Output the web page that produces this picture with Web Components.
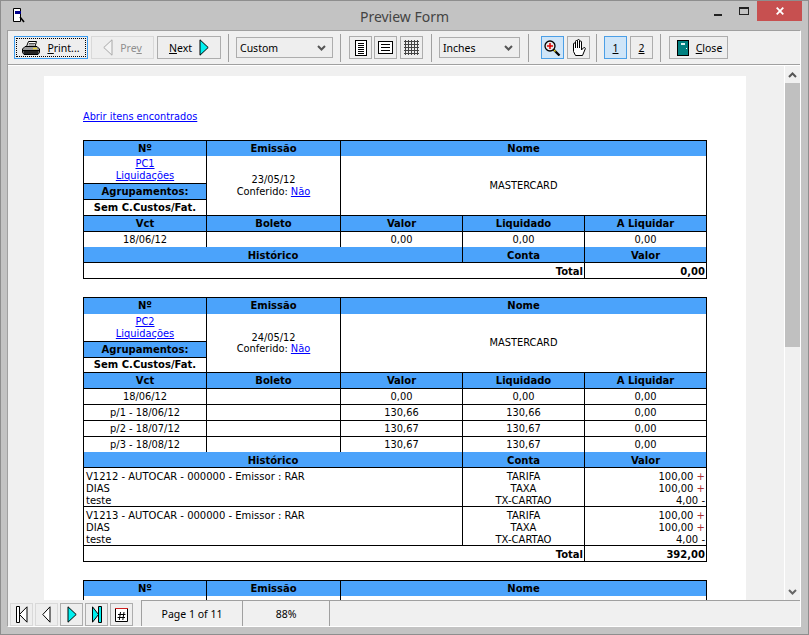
<!DOCTYPE html>
<html lang="pt"><head><meta charset="utf-8"><title>Preview Form</title>
<style>
html,body{margin:0;height:100%;overflow:hidden;background:#c3c3c3}
</style></head><body>
<pv-window>
<pv-title slot="title">Preview Form</pv-title>
<pv-toolbar slot="toolbar">
  <pv-btn w="74" focus icon="print"><u>P</u>rint...</pv-btn>
  <pv-btn w="63" disabled icon="prev">Pre<u>v</u></pv-btn>
  <pv-btn w="64" icon="next" after><u>N</u>ext</pv-btn>
  <pv-sep style="margin:0 4px"></pv-sep>
  <pv-select w="97">Custom</pv-select>
  <pv-sep style="margin:0 5px 0 4px"></pv-sep>
  <pv-btn w="23" icon="page1"></pv-btn>
  <pv-btn w="23" icon="page2" style="margin-left:-1px"></pv-btn>
  <pv-btn w="23" icon="grid"></pv-btn>
  <pv-sep style="margin:0 4px 0 5px"></pv-sep>
  <pv-select w="81">Inches</pv-select>
  <pv-sep style="margin:0 9px 0 5px"></pv-sep>
  <pv-btn w="23" active icon="zoom"></pv-btn>
  <pv-btn w="23" icon="hand"></pv-btn>
  <pv-sep style="margin:0 4px 0 3px"></pv-sep>
  <pv-btn w="23" active><u>1</u></pv-btn>
  <pv-btn w="23"><u>2</u></pv-btn>
  <pv-sep style="margin:0 5px 0 4px"></pv-sep>
  <pv-btn w="59" icon="door" style="padding-left:2px"><u>C</u>lose</pv-btn>
</pv-toolbar>
<pv-view slot="view">
  <pv-page>
    <rp-link>Abrir itens encontrados</rp-link>

    <rp-table rows="15 28 16 16 16 15 16 16">
      <rp-cell h c="1" r="1">Nº</rp-cell><rp-cell h c="2" r="1">Emissão</rp-cell><rp-cell h c="3/6" r="1">Nome</rp-cell>
      <rp-cell c="1" r="2" b tight><a href="#">PC1</a><br><a href="#">Liquidações</a></rp-cell>
      <rp-cell c="2" r="2/5" b tight>23/05/12<br>Conferido: <a href="#">Não</a></rp-cell>
      <rp-cell c="3/6" r="2/5" b>MASTERCARD</rp-cell>
      <rp-cell h b c="1" r="3">Agrupamentos:</rp-cell>
      <rp-cell strong b c="1" r="4">Sem C.Custos/Fat.</rp-cell>
      <rp-cell h b c="1" r="5">Vct</rp-cell><rp-cell h b c="2" r="5">Boleto</rp-cell><rp-cell h b c="3" r="5">Valor</rp-cell><rp-cell h b c="4" r="5">Liquidado</rp-cell><rp-cell h b c="5" r="5">A Liquidar</rp-cell>
      <rp-cell c="1" r="6">18/06/12</rp-cell><rp-cell c="2" r="6"></rp-cell><rp-cell c="3" r="6">0,00</rp-cell><rp-cell c="4" r="6">0,00</rp-cell><rp-cell c="5" r="6">0,00</rp-cell>
      <rp-cell h b t c="1/4" r="7">Histórico</rp-cell><rp-cell h b t c="4" r="7">Conta</rp-cell><rp-cell h b t c="5" r="7">Valor</rp-cell>
      <rp-cell strong right b c="1/5" r="8">Total</rp-cell><rp-cell strong right b c="5" r="8">0,00</rp-cell>
    </rp-table>

    <rp-table rows="16 28 16 15 16 16 16 16 15 16 39 39 16">
      <rp-cell h c="1" r="1">Nº</rp-cell><rp-cell h c="2" r="1">Emissão</rp-cell><rp-cell h c="3/6" r="1">Nome</rp-cell>
      <rp-cell c="1" r="2" b tight><a href="#">PC2</a><br><a href="#">Liquidações</a></rp-cell>
      <rp-cell c="2" r="2/5" b tight>24/05/12<br>Conferido: <a href="#">Não</a></rp-cell>
      <rp-cell c="3/6" r="2/5" b>MASTERCARD</rp-cell>
      <rp-cell h b c="1" r="3">Agrupamentos:</rp-cell>
      <rp-cell strong b c="1" r="4">Sem C.Custos/Fat.</rp-cell>
      <rp-cell h b c="1" r="5">Vct</rp-cell><rp-cell h b c="2" r="5">Boleto</rp-cell><rp-cell h b c="3" r="5">Valor</rp-cell><rp-cell h b c="4" r="5">Liquidado</rp-cell><rp-cell h b c="5" r="5">A Liquidar</rp-cell>
      <rp-cell b c="1" r="6">18/06/12</rp-cell><rp-cell b c="2" r="6"></rp-cell><rp-cell b c="3" r="6">0,00</rp-cell><rp-cell b c="4" r="6">0,00</rp-cell><rp-cell b c="5" r="6">0,00</rp-cell>
      <rp-cell b c="1" r="7">p/1 - 18/06/12</rp-cell><rp-cell b c="2" r="7"></rp-cell><rp-cell b c="3" r="7">130,66</rp-cell><rp-cell b c="4" r="7">130,66</rp-cell><rp-cell b c="5" r="7">0,00</rp-cell>
      <rp-cell b c="1" r="8">p/2 - 18/07/12</rp-cell><rp-cell b c="2" r="8"></rp-cell><rp-cell b c="3" r="8">130,67</rp-cell><rp-cell b c="4" r="8">130,67</rp-cell><rp-cell b c="5" r="8">0,00</rp-cell>
      <rp-cell c="1" r="9">p/3 - 18/08/12</rp-cell><rp-cell c="2" r="9"></rp-cell><rp-cell c="3" r="9">130,67</rp-cell><rp-cell c="4" r="9">130,67</rp-cell><rp-cell c="5" r="9">0,00</rp-cell>
      <rp-cell h b t c="1/4" r="10">Histórico</rp-cell><rp-cell h b t c="4" r="10">Conta</rp-cell><rp-cell h b t c="5" r="10">Valor</rp-cell>
      <rp-cell multi left b c="1/4" r="11">V1212 - AUTOCAR - 000000 - Emissor : RAR<br>DIAS<br>teste</rp-cell><rp-cell multi b c="4" r="11">TARIFA<br>TAXA<br>TX-CARTAO</rp-cell><rp-cell multi right b c="5" r="11">100,00 <i class="p">+</i><br>100,00 <i class="p">+</i><br>4,00 <i>-</i></rp-cell>
      <rp-cell multi left b c="1/4" r="12">V1213 - AUTOCAR - 000000 - Emissor : RAR<br>DIAS<br>teste</rp-cell><rp-cell multi b c="4" r="12">TARIFA<br>TAXA<br>TX-CARTAO</rp-cell><rp-cell multi right b c="5" r="12">100,00 <i class="p">+</i><br>100,00 <i class="p">+</i><br>4,00 <i>-</i></rp-cell>
      <rp-cell strong right b c="1/5" r="13">Total</rp-cell><rp-cell strong right b c="5" r="13">392,00</rp-cell>
    </rp-table>

    <rp-table rows="15 28">
      <rp-cell h c="1" r="1">Nº</rp-cell><rp-cell h c="2" r="1">Emissão</rp-cell><rp-cell h c="3/6" r="1">Nome</rp-cell>
      <rp-cell c="1" r="2"></rp-cell><rp-cell c="2" r="2"></rp-cell><rp-cell c="3/6" r="2"></rp-cell>
    </rp-table>
  </pv-page>
</pv-view>
<pv-status slot="status">
  <pv-btn w="23" disabled icon="first"></pv-btn>
  <pv-btn w="23" disabled icon="prevb"></pv-btn>
  <pv-btn w="23" icon="nextb"></pv-btn>
  <pv-btn w="23" icon="last"></pv-btn>
  <pv-btn w="23" icon="goto"></pv-btn>
  <pv-panel w="101" style="margin-left:6px">Page 1 of 11</pv-panel>
  <pv-panel w="87" style="margin-left:-2px">88%</pv-panel>
  <pv-panel style="margin-left:-2px"></pv-panel>
</pv-status>
</pv-window>

<script>
const UI='"Noto Sans","Liberation Sans",sans-serif';
const RP='"DejaVu Sans","Liberation Sans",sans-serif';
const def=(n,css,html,init)=>customElements.define(n,class extends HTMLElement{
  connectedCallback(){ if(this.shadowRoot)return; const s=this.attachShadow({mode:'open'});
    s.innerHTML='<style>'+css+'</style>'+html; if(init)init.call(this,s);} });

const ICONS={
print:'<svg width="18" height="14" viewBox="0 0 18 14"><path d="M6.500.5h8l-1.500 5H4.500z" fill="#fff" stroke="#000"/><path d="M7 2.500h6M6.500 4h6" stroke="#555"/><path d="M3 5.500h12l2.500 2.500v3.500L16 13.500H2L.5 11.500V8z" fill="#9a9a9a" stroke="#000"/><path d="M1 9.500h16" stroke="#000" stroke-width="1"/><path d="M1.500 11.500h15" stroke="#222" stroke-width="3"/><path d="M11 7.500h4" stroke="#e8d43a" stroke-width="1.500"/></svg>',
prev:'<svg width="10" height="17" viewBox="0 0 10 17"><path d="M9 .8V16.200L.8 8.500z" fill="#f4f4f4" stroke="#a8a8a8"/></svg>',
next:'<svg width="10" height="17" viewBox="0 0 10 17"><path d="M1 .8V16.200L9.200 8.500z" fill="#00f0f0" stroke="#000"/></svg>',
prevb:'<svg width="9" height="17" viewBox="0 0 9 17"><path d="M8 .8V16.200L.8 8.500z" fill="#fff" stroke="#000"/></svg>',
nextb:'<svg width="10" height="17" viewBox="0 0 10 17"><path d="M1 .8V16.200L9.200 8.500z" fill="#00f0f0" stroke="#000"/></svg>',
first:'<svg width="12" height="17" viewBox="0 0 12 17"><path d="M.5.500h3v16h-3z" fill="#fff" stroke="#000"/><path d="M11 .8V16.200L3.500 8.500z" fill="#fff" stroke="#000"/></svg>',
last:'<svg width="10" height="17" viewBox="0 0 10 17"><path d="M.5.800V16.200L6.500 8.500z" fill="#00f0f0" stroke="#000"/><path d="M6.500.500h3v16h-3z" fill="#00f0f0" stroke="#000"/></svg>',
goto:'<svg width="13" height="15" viewBox="0 0 13 15"><path d="M.5 1.500h12v13H.5z" fill="#fff" stroke="#000"/><path d="M0 1.500h13" stroke="#d02020" stroke-width="1"/><path d="M5.500 5l-1.200 8M9 5l-1.200 8M3 7.500h7.500M2.500 10.500h7.500" stroke="#000"/></svg>',
page1:'<svg width="12" height="16" viewBox="0 0 12 16" shape-rendering="crispEdges"><path d="M.5.500h11v15H.5z" fill="#fff" stroke="#000"/><path d="M3 3.500h6M3 5.500h6M3 7.500h6M3 9.500h6M3 11.500h6M3 13.500h6" stroke="#000"/></svg>',
page2:'<svg width="15" height="13" viewBox="0 0 15 13" shape-rendering="crispEdges"><path d="M.5.500h14v12H.5z" fill="#fff" stroke="#000"/><path d="M3 3.500h9M3 6.500h9M3 9.500h9" stroke="#000"/></svg>',
grid:'<svg width="15" height="15" viewBox="0 0 15 15" shape-rendering="crispEdges"><path d="M0 1.500h15M0 4.500h15M0 7.500h15M0 10.500h15M0 13.500h15M1.500 0v15M4.500 0v15M7.500 0v15M10.500 0v15M13.500 0v15" stroke="#444"/></svg>',
zoom:'<svg width="17" height="16" viewBox="0 0 17 16"><path d="M9.500 9.500l6 6" stroke="#000" stroke-width="2.300"/><path d="M10 10l1.500 1.500" stroke="#e8d020" stroke-width="1.600"/><circle cx="6" cy="6" r="5" fill="#e8e8e8" stroke="#000" stroke-width="1.300"/><path d="M6 3v6M3 6h6" stroke="#e00000" stroke-width="1.500"/></svg>',
hand:'<svg width="15" height="17" viewBox="0 0 15 17"><path d="M4.500 16.500L2.500 12.500V5a1 1 0 0 1 2 0V9V2.500a1 1 0 0 1 2 0V9V1.500a1 1 0 0 1 2 0V9V3a1 1 0 0 1 2 0V11L12.300 9a1 1 0 0 1 1.900 1L11.500 16.500Z" fill="#fff" stroke="#000"/></svg>',
door:'<svg width="12" height="16" viewBox="0 0 12 16" shape-rendering="crispEdges"><path d="M.5.500h11v15H.5z" fill="#008080" stroke="#000"/><path d="M4 3h4v2H4z" fill="#d8f0f0"/><path d="M9 8h1v1H9z" fill="#fff"/></svg>'
};

def('pv-window',`:host{display:flex;flex-direction:column;box-sizing:border-box;width:809px;height:635px;background:#c3c3c3;border:1px solid #8e8e8e;padding:0 0 7px 6px;font:10.5px ${UI};color:#000}
  .client{flex:1;min-height:0;width:794px;display:flex;flex-direction:column;border:1px solid;border-color:#a0a0a0 #fff #fff #a0a0a0;box-sizing:border-box;background:#f0f0f0}`,
  `<slot name="title"></slot><div class="client"><slot name="toolbar"></slot><slot name="view"></slot><slot name="status"></slot></div>`);

def('pv-title',`:host{display:flex;align-items:flex-start;height:29px;flex:none;position:relative;margin-right:6px}
  .ic{margin:7px 0 0 5px;flex:none}
  .t{position:absolute;left:0;right:0;top:6px;text-align:center;font:14px ${UI};color:#444;padding-left:0}
  .ctl{margin-left:auto;display:flex;align-items:flex-start}
  .b{width:26px;height:20px;display:flex;align-items:center;justify-content:center}
  .x{width:45px;height:20px;background:#c75050;display:flex;align-items:center;justify-content:center}`,
  `<svg class="ic" width="14" height="15" viewBox="0 0 14 15"><path d="M1.500 .5h7v13h-7z" fill="#fff" stroke="#000"/><path d="M3 4.500h6" stroke="#00008b" stroke-width="3"/><path d="M8 9l4 5" stroke="#000" stroke-width="1.600"/></svg>
   <div class="t"><slot></slot></div>
   <div class="ctl">
    <div class="b"><svg width="8" height="2" style="margin-top:8px"><rect width="8" height="2" fill="#222"/></svg></div>
    <div class="b"><svg width="10" height="8"><rect x=".5" y=".5" width="9" height="7" fill="none" stroke="#222"/><rect width="10" height="2" fill="#222"/></svg></div>
    <div class="x"><svg width="8" height="8" viewBox="0 0 8 8"><path d="M.7.7l6.600 6.600M7.300.7L.7 7.300" stroke="#fff" stroke-width="1.800"/></svg></div>
   </div>`);

def('pv-toolbar',`:host{display:flex;align-items:center;gap:3px;box-sizing:border-box;height:34px;flex:none;padding:0 0 0 6px;background:#f0f0f0;border-bottom:1px solid #a0a0a0}`,`<slot></slot>`);

def('pv-sep',`:host{display:block;width:1px;height:28px;background:#a0a0a0;flex:none}`,``);

def('pv-btn',`:host{display:inline-flex;box-sizing:border-box;height:23px;align-items:center;justify-content:center;gap:7px;background:#eee;border:1px solid #adadad;flex:none;color:#000;position:relative;font:10.5px ${UI}}
  :host([disabled]){border-color:#d9d9d9;color:#8f8f8f}
  :host([active]){background:#cfe5f8;border-color:#4c9fe6}
  :host([focus]){border-color:#3c9cf0}
  :host([focus])::after{content:"";position:absolute;inset:1px;border:1px dotted #000}
  :host([after]) .i{order:2}
  .i{display:flex}
  .i:empty{display:none}`,
  `<span class="i"></span><span class="l"><slot></slot></span>`,
  function(s){const k=this.getAttribute('icon'); s.querySelector('.i').innerHTML=k?ICONS[k]:'';
    if(!this.firstChild)s.querySelector('.l').style.display='none';
    this.style.width=this.getAttribute('w')+'px'; });

def('pv-select',`:host{display:flex;box-sizing:border-box;height:21px;align-items:center;border:1px solid #adadad;background:#eee;padding:0 6px 0 3px;justify-content:space-between;flex:none;font:10.5px ${UI}}`,
  `<span><slot></slot></span><svg width="9" height="6" viewBox="0 0 9 6"><path d="M1 1l3.500 3.500L8 1" fill="none" stroke="#555" stroke-width="2"/></svg>`,
  function(){this.style.width=this.getAttribute('w')+'px';});

def('pv-view',`:host{flex:1;min-height:0;display:flex;background:#f0f0f0;border-top:1px solid #fff;overflow:hidden}
  .area{flex:1;min-width:0;overflow:hidden;padding:10px 0 0 36px}
  .sb{width:16px;flex:none;box-sizing:border-box;border-left:1px solid #fff;display:flex;flex-direction:column;align-items:center}
  .a{height:17px;flex:none;display:flex;align-items:center;justify-content:center}
  .th{width:100%;height:264px;background:#c0c0c0;flex:none}
  .sp{flex:1}`,
  `<div class="area"><slot></slot></div>
   <div class="sb"><div class="a"><svg width="9" height="6" viewBox="0 0 9 6"><path d="M1 5l3.500-3.500L8 5" fill="none" stroke="#555" stroke-width="2"/></svg></div><div class="th"></div><div class="sp"></div><div class="a"><svg width="9" height="6" viewBox="0 0 9 6"><path d="M1 1l3.500 3.500L8 1" fill="none" stroke="#666" stroke-width="2"/></svg></div></div>`);

def('pv-page',`:host{display:flex;flex-direction:column;gap:18px;box-sizing:border-box;width:702px;min-height:600px;background:#fff;padding:35px 0 0 39px;font:9.85px/12px ${RP};color:#000}`,`<slot></slot>`);

def('rp-link',`:host{display:block;height:12px;margin-bottom:-1px;color:#00f;text-decoration:underline;font-size:9.75px}`,`<slot></slot>`);

def('rp-table',`:host{display:grid;width:624px;box-sizing:border-box;border:solid #000;border-width:1px 1px 0 0;grid-template-columns:123px 134px 122px 122px 122px}`,`<slot></slot>`,
  function(){this.shadowRoot.host.style.gridTemplateRows=this.getAttribute('rows').split(' ').map(x=>x+'px').join(' ');});

def('rp-cell',`:host{display:flex;flex-direction:column;justify-content:center;align-items:stretch;box-sizing:border-box;border-left:1px solid #000;text-align:center;min-width:0;background:#fff}
  :host([h]){background:#4ba3fb;font-weight:700;font-size:10px}
  :host([strong]){font-weight:700;font-size:10px}
  :host([b]){border-bottom:1px solid #000}
  :host([right]){text-align:right;padding-right:1px}
  :host([left]){text-align:left;padding-left:2px}
  :host([t]),:host([strong][right]){padding-top:2px}
  :host([multi]){line-height:12px;font-size:10px;padding-top:3px}
  :host([tight]){line-height:11.5px}
  ::slotted(a){color:#00f}
  ::slotted(i){font-style:normal;color:#000}
  ::slotted(i.p){color:#a33}`,
  `<div><slot></slot></div>`,
  function(){this.style.gridColumn=this.getAttribute('c');this.style.gridRow=this.getAttribute('r');});

def('pv-status',`:host{display:flex;align-items:flex-end;gap:2px;height:26px;flex:none;box-sizing:border-box;padding:0 0 0 2px;background:#f0f0f0}`,`<slot></slot>`);
def('pv-panel',`:host{display:flex;align-items:center;justify-content:center;height:100%;border-left:1px solid #a0a0a0;border-top:1px solid #a0a0a0;box-sizing:border-box;font:10.5px ${UI};flex:1}`,`<slot></slot>`,
  function(){const w=this.getAttribute('w'); if(w){this.style.flex='none';this.style.width=w+'px';}});
</script>
</body></html>
